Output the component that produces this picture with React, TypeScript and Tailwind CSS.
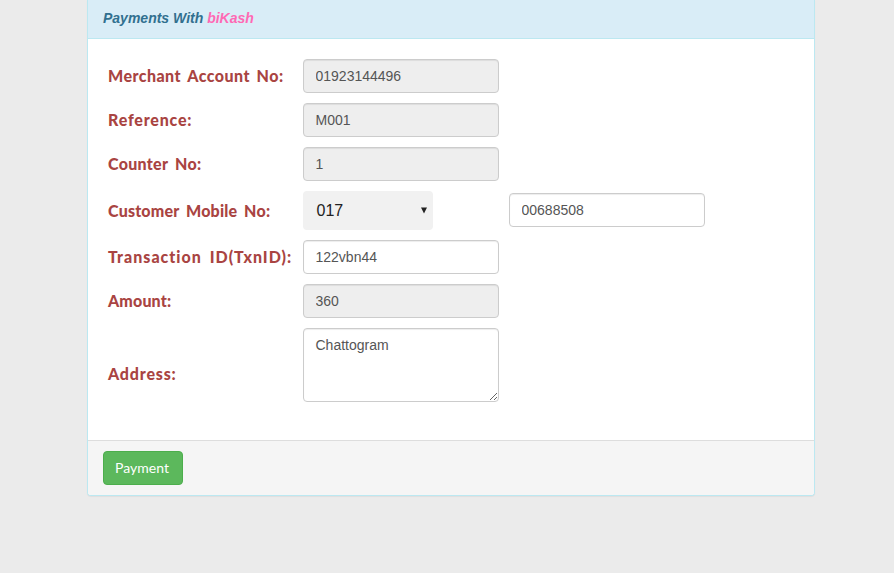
import React from "react";

const field =
  "block h-[34px] w-[196px] rounded-[4px] border border-[#ccc] px-[11.5px] text-[14px] leading-[20px] text-[#555] outline-none shadow-[inset_0_1px_1px_rgba(0,0,0,0.075)] font-['Liberation_Sans',Arial,sans-serif]";

function Label({ text, tracking }: { text: string; tracking: string }) {
  return (
    <label
      className={`whitespace-nowrap font-['Comic_Sans_MS','Lato',sans-serif] text-[16px] leading-[20px] font-black text-[#a94442] ${tracking}`}
    >
      {text}
    </label>
  );
}

export default function App() {
  return (
    <main className="h-[573px] overflow-hidden bg-[#ebebeb] pl-[87px] font-['Liberation_Sans',Arial,sans-serif]">
      <section className="flex h-[496px] w-[728px] flex-col overflow-hidden rounded-b-[4px] border border-t-0 border-[#bce8f1] bg-white shadow-[0_1px_1px_rgba(0,0,0,0.05)]">
        <header className="h-[39px] shrink-0 border-b border-[#bce8f1] bg-[#d9edf7] pt-2 pl-[15px] text-[14px] leading-[20px] font-bold text-[#31708f] italic">
          Payments With <span className="text-[#ff69b4]">biKash</span>
        </header>
        <form className="grid grow grid-cols-[185px_196px_196px] content-start items-center gap-[10px] pt-5 pl-[20px]">
          <Label text="Merchant Account No:" tracking="tracking-[0.45px] [word-spacing:2.5px]" />
          <input className={`${field} col-span-2 bg-[#eee]`} defaultValue="01923144496" readOnly />

          <Label text="Reference:" tracking="tracking-[0.8px]" />
          <input className={`${field} col-span-2 bg-[#eee]`} defaultValue="M001" readOnly />

          <Label text="Counter No:" tracking="tracking-[0.3px] [word-spacing:3px]" />
          <input className={`${field} col-span-2 bg-[#eee]`} defaultValue="1" readOnly />

          <Label text="Customer Mobile No:" tracking="tracking-[0.2px] [word-spacing:2.8px]" />
          <div className="flex h-[39px] w-[130px] items-center justify-between rounded-[4px] bg-[#f1f1f1] pr-[6px] pl-[13.5px] text-[16px] leading-[20px] text-[#222]">
            <span>017</span>
            <svg width="6" height="7" viewBox="0 0 6 7" className="mb-px">
              <path d="M0 0.5H6L3 6.5Z" fill="#222" />
            </svg>
          </div>
          <input className={`${field} mb-px bg-white`} defaultValue="00688508" />

          <Label text="Transaction ID(TxnID):" tracking="tracking-[1px] [word-spacing:3px]" />
          <input className={`${field} col-span-2 bg-white`} defaultValue="122vbn44" />

          <Label text="Amount:" tracking="tracking-[0.15px]" />
          <input className={`${field} col-span-2 bg-[#eee]`} defaultValue="360" readOnly />

          <div className="pt-[20px]">
            <Label text="Address:" tracking="tracking-[0.8px]" />
          </div>
          <textarea
            className="col-span-2 block h-[74px] w-[196px] rounded-[4px] border border-[#ccc] bg-white px-[11.5px] py-[6px] font-['Liberation_Sans',Arial,sans-serif] text-[14px] leading-[20px] text-[#555] shadow-[inset_0_1px_1px_rgba(0,0,0,0.075)] outline-none"
            defaultValue="Chattogram"
          />
        </form>
        <footer className="h-[55px] shrink-0 border-t border-[#ddd] bg-[#f5f5f5] pt-[10px] pl-[15px]">
          <button className="h-[34px] w-[80px] rounded-[4px] border border-[#4cae4c] bg-[#5cb85c] pr-[2px] font-['Comic_Sans_MS','Lato',sans-serif] text-[14px] leading-[20px] text-white">
            Payment
          </button>
        </footer>
      </section>
    </main>
  );
}
